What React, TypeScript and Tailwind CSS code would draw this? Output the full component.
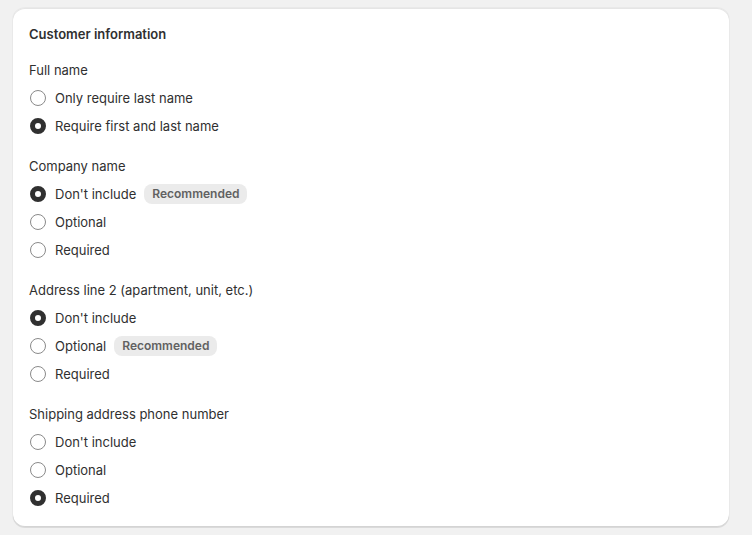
import React from "react";

type Opt = { label: string; checked?: boolean; badge?: string };
type Group = { title: string; options: Opt[] };

const groups: Group[] = [
  {
    title: "Full name",
    options: [{ label: "Only require last name" }, { label: "Require first and last name", checked: true }],
  },
  {
    title: "Company name",
    options: [
      { label: "Don't include", checked: true, badge: "Recommended" },
      { label: "Optional" },
      { label: "Required" },
    ],
  },
  {
    title: "Address line 2 (apartment, unit, etc.)",
    options: [
      { label: "Don't include", checked: true },
      { label: "Optional", badge: "Recommended" },
      { label: "Required" },
    ],
  },
  {
    title: "Shipping address phone number",
    options: [{ label: "Don't include" }, { label: "Optional" }, { label: "Required", checked: true }],
  },
];

function Radio({ checked }: { checked?: boolean }) {
  return checked ? (
    <span className="box-border block h-4 w-4 rounded-full border-[5px] border-[#303030] bg-white" />
  ) : (
    <span className="box-border block h-4 w-4 rounded-full border border-[#8a8a8a] bg-white" />
  );
}

export default function App() {
  return (
    <div
      className="min-h-[535px] w-[752px] bg-[#f1f1f1] pl-[13px] pr-[23px] pt-[8px] text-[13px] text-[#303030]"
      style={{ fontFamily: "Inter, 'Noto Sans', sans-serif" }}
    >
      <div className="rounded-xl bg-white px-4 pb-[19px] pt-4 shadow-[0_1px_0_0_rgba(26,26,26,0.07),0_1px_0_0_rgba(204,204,204,0.5)_inset,0_-1px_0_0_rgba(0,0,0,0.17)_inset,0_0_0_1px_rgba(0,0,0,0.03)]">
        <h2 className="text-[13px] font-semibold leading-5">Customer information</h2>
        <div className="mt-4 flex flex-col gap-5">
          {groups.map((g) => (
            <div key={g.title} className="flex flex-col">
              <div className="leading-5">{g.title}</div>
              <div className="mt-2 flex flex-col gap-2">
                {g.options.map((o) => (
                  <label key={o.label} className="flex h-5 items-center">
                    <span className="flex w-[26px] items-center pl-[1px]">
                      <Radio checked={o.checked} />
                    </span>
                    <span className="leading-5">{o.label}</span>
                    {o.badge && (
                      <span className="ml-2 rounded-lg bg-[#ebebeb] px-2 text-[12px] font-semibold leading-5 text-[#616161]">
                        {o.badge}
                      </span>
                    )}
                  </label>
                ))}
              </div>
            </div>
          ))}
        </div>
      </div>
    </div>
  );
}
